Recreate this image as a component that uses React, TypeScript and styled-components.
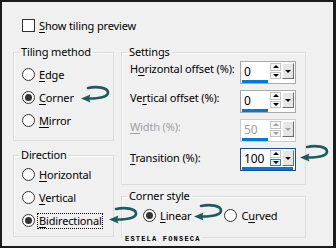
import * as React from "react";
import styled, { createGlobalStyle } from "styled-components";

const GlobalStyle = createGlobalStyle`
  html, body {
    margin: 0;
    padding: 0;
    background: #f0f0f0;
  }
  body {
    font-family: "Noto Sans", "Open Sans", sans-serif;
    font-size: 11px;
    color: #000;
    letter-spacing: -0.15px;
  }
  u {
    text-decoration-thickness: 1px;
    text-underline-offset: 2px;
  }
`;

const Dialog = styled.div`
  position: relative;
  width: 336px;
  height: 248px;
  box-sizing: border-box;
  border: 2px solid #1c1c1c;
  border-right-width: 3px;
  background: #f0f0f0;
  padding: 17px 0 0 11px;
  overflow: hidden;
`;

const CheckRow = styled.div`
  display: flex;
  align-items: center;
  height: 13px;
  margin-left: 9px;
`;

const CheckBox = styled.span`
  width: 13px;
  height: 13px;
  box-sizing: border-box;
  border: 1px solid #333;
  background: #fff;
  flex-shrink: 0;
`;

const Label = styled.span<{ $disabled?: boolean; $focus?: boolean }>`
  margin-left: ${(p) => (p.$focus ? "3px" : "4px")};
  padding: ${(p) => (p.$focus ? "0 0 0 1px" : "0")};
  line-height: ${(p) => (p.$focus ? "14px" : "16px")};
  outline: ${(p) => (p.$focus ? "1px dotted #000" : "none")};
  color: ${(p) => (p.$disabled ? "#a0a0a0" : "#000")};
  white-space: nowrap;
`;

const Columns = styled.div`
  display: grid;
  grid-template-columns: 101px 185px;
  column-gap: 7px;
  margin-top: 12px;
`;

const Column = styled.div<{ $gap: number }>`
  display: flex;
  flex-direction: column;
  gap: ${(p) => p.$gap}px;
`;

const Group = styled.fieldset<{ $h: number }>`
  margin: 0;
  min-width: 0;
  box-sizing: border-box;
  height: ${(p) => p.$h}px;
  border: 1px solid #dcdcdc;
  box-shadow: 1px 1px 0 #fff inset;
  padding: 0;
`;

const Legend = styled.legend`
  margin-left: 5px;
  padding: 0 2px;
  line-height: 16px;
`;

const GroupBody = styled.div<{ $pt: number; $pl: number }>`
  padding: ${(p) => p.$pt}px 0 0 ${(p) => p.$pl}px;
`;

const RadioRow = styled.div`
  display: flex;
  align-items: center;
  height: 23px;
`;

const RadioPair = styled.div`
  display: flex;
  align-items: center;
  gap: 33px;
`;

const RadioItem = styled.div`
  display: flex;
  align-items: center;
`;

const RadioCircle = styled.span<{ $checked?: boolean }>`
  width: 13px;
  height: 13px;
  box-sizing: border-box;
  border-radius: 50%;
  border: 1px solid #333;
  background: #fff;
  display: inline-flex;
  align-items: center;
  justify-content: center;
  flex-shrink: 0;

  &::after {
    content: "";
    width: 7px;
    height: 7px;
    border-radius: 50%;
    background: #333;
    display: ${(p) => (p.$checked ? "block" : "none")};
  }
`;

const Fields = styled.div`
  display: flex;
  flex-direction: column;
  gap: 6px;
`;

const FieldRow = styled.div`
  display: flex;
  align-items: flex-start;
  height: 23px;
`;

const FieldLabel = styled.span<{ $disabled?: boolean; $drop?: number }>`
  width: 110px;
  line-height: 16px;
  padding-top: ${(p) => p.$drop ?? 0}px;
  color: ${(p) => (p.$disabled ? "#a0a0a0" : "#000")};
  white-space: nowrap;
`;

const Spin = styled.div<{ $focused?: boolean; $disabled?: boolean }>`
  width: 56px;
  height: 23px;
  box-sizing: border-box;
  border: 1px solid
    ${(p) => (p.$focused ? "#1e4f91" : p.$disabled ? "#cccccc" : "#a9a9a9")};
  background: #fff;
  padding: 1px 1px 0 1px;
  display: flex;
  flex-direction: column;
`;

const SpinTop = styled.div`
  display: flex;
  height: 16px;
`;

const SpinValue = styled.div<{ $disabled?: boolean }>`
  flex: 1;
  padding-left: 2px;
  font-size: 12px;
  line-height: 17px;
  color: ${(p) => (p.$disabled ? "#a0a0a0" : "#000")};
`;

const Steppers = styled.div`
  width: 11px;
  display: flex;
  flex-direction: column;
  gap: 1px;
  margin-right: 1px;
`;

const Step = styled.div<{ $hot?: boolean }>`
  flex: 1;
  box-sizing: border-box;
  border: 1px solid ${(p) => (p.$hot ? "#3c7fb1" : "#c4c4c4")};
  background: ${(p) => (p.$hot ? "#dcecfc" : "#f7f7f7")};
  display: flex;
  align-items: center;
  justify-content: center;
`;

const DropButton = styled.div`
  width: 12px;
  box-sizing: border-box;
  border-top: 1px solid #fff;
  border-left: 1px solid #fff;
  border-right: 1px solid #6d6d6d;
  border-bottom: 1px solid #6d6d6d;
  background: #e6e6e6;
  display: flex;
  align-items: center;
  justify-content: center;
`;

const Tri = styled.span<{ $up?: boolean; $dim?: boolean }>`
  width: 0;
  height: 0;
  border-left: 3px solid transparent;
  border-right: 3px solid transparent;
  ${(p) =>
    p.$up
      ? `border-bottom: 3px solid ${p.$dim ? "#a0a0a0" : "#000"};`
      : `border-top: 3px solid ${p.$dim ? "#a0a0a0" : "#000"};`}
`;

const Bar = styled.div<{ $w: number }>`
  height: 3px;
  margin-top: 1px;
  width: ${(p) => p.$w}px;
  background: #0078d7;
`;

const Arrow = styled.svg<{ $x: number; $y: number }>`
  position: absolute;
  left: ${(p) => p.$x - 2}px;
  top: ${(p) => p.$y - 2}px;
  overflow: visible;
`;

const Signature = styled.div`
  position: absolute;
  left: 121px;
  top: 233px;
  padding: 0 2px;
  background: #f0f0f0;
  font-family: "Liberation Mono", monospace;
  font-weight: bold;
  font-size: 7px;
  line-height: 8px;
  letter-spacing: 1.2px;
`;

type RadioProps = { checked?: boolean; focus?: boolean; children: React.ReactNode };

const Radio = ({ checked, focus, children }: RadioProps) => (
  <RadioItem>
    <RadioCircle $checked={checked} />
    <Label $focus={focus}>{children}</Label>
  </RadioItem>
);

type SpinProps = {
  value: string;
  bar: number;
  focused?: boolean;
  disabled?: boolean;
};

const SpinBox = ({ value, bar, focused, disabled }: SpinProps) => (
  <Spin $focused={focused} $disabled={disabled}>
    <SpinTop>
      <SpinValue $disabled={disabled}>{value}</SpinValue>
      <Steppers>
        <Step>
          <Tri $up $dim={disabled} />
        </Step>
        <Step $hot={focused}>
          <Tri $dim={disabled} />
        </Step>
      </Steppers>
      <DropButton>
        <Tri $dim={disabled} />
      </DropButton>
    </SpinTop>
    <Bar $w={bar} />
  </Spin>
);

const CurlArrow = ({ x, y }: { x: number; y: number }) => (
  <Arrow $x={x} $y={y} width="28" height="18" viewBox="0 0 28 18">
    <path
      d="M7 3 C 16 1, 27 2.5, 27 7.5 C 27 12, 18 13.5, 8 13.5"
      fill="none"
      stroke="#1d5a5c"
      strokeWidth="2.6"
      strokeLinecap="round"
    />
    <polygon points="0,13.5 9.5,9.5 8,13.5 9.5,17.5" fill="#1d5a5c" />
  </Arrow>
);

export default function App() {
  return (
    <>
      <GlobalStyle />
      <Dialog>
        <CheckRow>
          <CheckBox />
          <Label>
            <u>S</u>how tiling preview
          </Label>
        </CheckRow>

        <Columns>
          <Column $gap={6}>
            <Group $h={97}>
              <Legend>Tiling method</Legend>
              <GroupBody $pt={3} $pl={8}>
                <RadioRow>
                  <Radio>
                    <u>E</u>dge
                  </Radio>
                </RadioRow>
                <RadioRow>
                  <Radio checked>
                    <u>C</u>orner
                  </Radio>
                </RadioRow>
                <RadioRow>
                  <Radio>
                    <u>M</u>irror
                  </Radio>
                </RadioRow>
              </GroupBody>
            </Group>

            <Group $h={90}>
              <Legend>Direction</Legend>
              <GroupBody $pt={0} $pl={8}>
                <RadioRow>
                  <Radio>
                    <u>H</u>orizontal
                  </Radio>
                </RadioRow>
                <RadioRow>
                  <Radio>
                    <u>V</u>ertical
                  </Radio>
                </RadioRow>
                <RadioRow>
                  <Radio checked focus>
                    <u>B</u>idirectional
                  </Radio>
                </RadioRow>
              </GroupBody>
            </Group>
          </Column>

          <Column $gap={3}>
            <Group $h={141}>
              <Legend>Settings</Legend>
              <GroupBody $pt={1} $pl={8}>
                <Fields>
                  <FieldRow>
                    <FieldLabel>
                      H<u>o</u>rizontal offset (%):
                    </FieldLabel>
                    <SpinBox value="0" bar={26} />
                  </FieldRow>
                  <FieldRow>
                    <FieldLabel>
                      Ve<u>r</u>tical offset (%):
                    </FieldLabel>
                    <SpinBox value="0" bar={26} />
                  </FieldRow>
                  <FieldRow>
                    <FieldLabel $disabled>
                      <u>W</u>idth (%):
                    </FieldLabel>
                    <SpinBox value="50" bar={26} disabled />
                  </FieldRow>
                  <FieldRow>
                    <FieldLabel $drop={2}>
                      <u>T</u>ransition (%):
                    </FieldLabel>
                    <SpinBox value="100" bar={51} focused />
                  </FieldRow>
                </Fields>
              </GroupBody>
            </Group>

            <Group $h={50}>
              <Legend>Corner style</Legend>
              <GroupBody $pt={0} $pl={21}>
                <RadioRow>
                  <RadioPair>
                    <Radio checked>
                      <u>L</u>inear
                    </Radio>
                    <Radio>
                      C<u>u</u>rved
                    </Radio>
                  </RadioPair>
                </RadioRow>
              </GroupBody>
            </Group>
          </Column>
        </Columns>

        <CurlArrow x={81} y={85} />
        <CurlArrow x={300} y={144} />
        <CurlArrow x={109} y={206} />
        <CurlArrow x={194} y={203} />

        <Signature>ESTELA FONSECA</Signature>
      </Dialog>
    </>
  );
}
